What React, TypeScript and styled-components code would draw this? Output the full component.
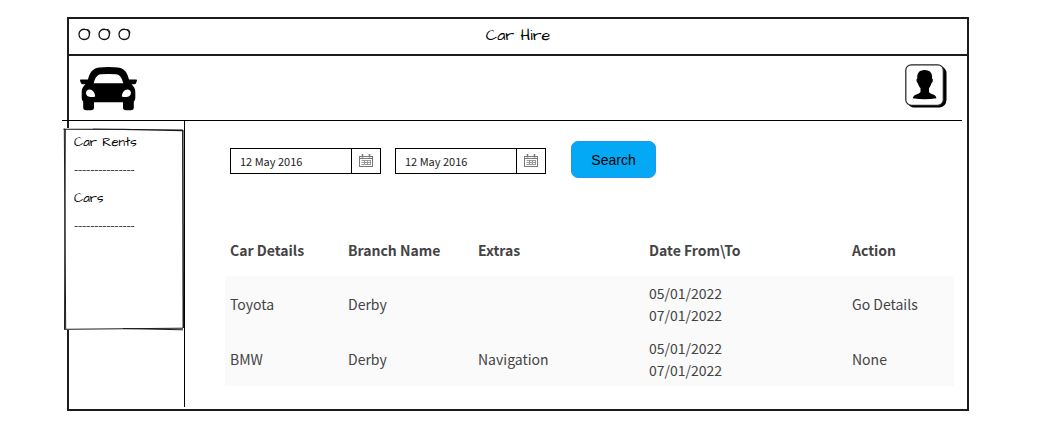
import React, { useState } from "react";
import styled, { createGlobalStyle } from "styled-components";

const INK = "#1c1c1c";
const SANS = '"Source Sans Pro", "Noto Sans CJK SC", "Open Sans", sans-serif';
const HAND = '"Architects Daughter", Lato, cursive, sans-serif';

const GlobalStyle = createGlobalStyle`
  *, *::before, *::after { box-sizing: border-box; }
  body { margin: 0; background: #fff; color: #000; font-family: ${SANS}; }
`;

const Page = styled.div`
  padding: 17px 89px 29px 67px;
`;

const Frame = styled.div`
  border: 2px solid ${INK};
  display: flex;
  flex-direction: column;
  min-height: 394px;
`;

const TitleBar = styled.div`
  display: grid;
  grid-template-columns: 1fr auto 1fr;
  align-items: center;
  height: 37px;
  padding: 0 9px 4px;
  border-bottom: 2px solid ${INK};
`;

const Dots = styled.div`
  display: flex;
  gap: 7px;
`;

const Title = styled.h1`
  margin: 0;
  font: 400 16px/24px ${HAND};
`;

const Header = styled.header`
  display: flex;
  align-items: flex-start;
  justify-content: space-between;
  height: 65px;
  margin: 0 5px 0 -7px;
  padding: 8px 15px 0 18px;
  border-bottom: 1px solid #000;
`;

const IconButton = styled.button`
  display: flex;
  padding: 0;
  border: 0;
  background: none;
  cursor: pointer;
`;

const Body = styled.div`
  display: flex;
  flex: 1;
`;

const Aside = styled.aside`
  flex: none;
  width: 116px;
  margin: 0 0 2px;
  padding-top: 7px;
  border-right: 1px solid #000;
`;

const NavCard = styled.nav`
  position: relative;
  height: 202px;
  margin-left: -6px;
  padding-left: 11px;
  background: #fff;
`;

const Outline = styled.svg`
  position: absolute;
  inset: 0;
  width: 100%;
  height: 100%;
  overflow: visible;
  pointer-events: none;
`;

const NavList = styled.ul`
  margin: 0;
  padding: 0;
  list-style: none;
  font: 400 13px/28px ${HAND};
`;

const NavLink = styled.a`
  color: inherit;
  text-decoration: none;
`;

const Main = styled.main`
  flex: 1;
  min-width: 0;
  padding: 20px 13px 22px 40px;
`;

const Filters = styled.form`
  display: flex;
  align-items: flex-end;
  gap: 14px;
  padding-left: 5px;
`;

const DateField = styled.div`
  display: flex;
  width: 151px;
  height: 26px;
  margin-bottom: 4px;
  border: 1px solid #000;
`;

const DateInput = styled.input`
  flex: 1;
  min-width: 0;
  padding: 0 9px;
  border: 0;
  background: none;
  color: #222;
  font: 400 11px/24px ${SANS};
`;

const CalendarButton = styled(IconButton)`
  align-items: center;
  justify-content: center;
  width: 29px;
  border-left: 1px solid #000;
`;

const SearchButton = styled.button`
  width: 85px;
  height: 37px;
  margin-left: 11px;
  padding: 0;
  border: 1px solid #2196f3;
  border-radius: 7px;
  background: #03a9f4;
  color: #000;
  font: 400 14px/20px "Liberation Sans", Arial, sans-serif;
  cursor: pointer;
`;

const Table = styled.table`
  width: 100%;
  margin-top: 45px;
  border-collapse: collapse;
  table-layout: fixed;
  color: #444;
  font: 400 14px/22px ${SANS};
  text-align: left;
`;

const Col = styled.col<{ $width: number }>`
  width: ${({ $width }) => $width}px;
`;

const Th = styled.th`
  height: 53px;
  padding: 0 5px;
  font-weight: 700;
`;

const Td = styled.td`
  height: 55px;
  padding: 0 5px;
  background: #fafafa;
`;

const DateLine = styled.div``;

const DotIcon = () => (
  <svg width="13" height="13" viewBox="0 0 13 13" fill="none" stroke="#111" strokeLinecap="round" aria-hidden="true">
    <path d="M7 1.300C3.500.9 1 3 1 6.200 1 9.500 3.400 11.500 6.300 11.500 9.300 11.500 11.200 9.300 11.400 6.500 11.600 3.500 10 1.400 6.500 1.300" strokeWidth="1.300" />
    <path d="M9 1.500C11.200 1.300 12.200 3 11.800 5.500" strokeWidth="1" />
  </svg>
);

const CarIcon = () => (
  <svg width="57" height="47" viewBox="0 -3 57 47" role="img" aria-label="Car Hire">
    <path
      fillRule="evenodd"
      d="M19 .5Q28.500-.3 38 .5C44.500 1.200 47.500 6 49 12.500H56.300Q57 12.500 57 13.500L56 16.300Q55.600 17.300 54 17.300H51.500C54 19.500 55.300 22 55.300 25V31Q55.300 33.500 53.800 34.500V40.500Q53.800 43.300 50.800 43.300H46Q43 43.300 43 40.500V35.300H14V40.500Q14 43.300 11 43.300H6.200Q3.200 43.300 3.200 40.500V34.500Q1.700 33.500 1.700 31V25C1.700 22 3 19.500 5.500 17.300H3Q1.400 17.300 1 16.300L0 13.500Q0 12.500.7 12.500H8C9.500 6 12.500 1.200 19 .5ZM21 7.300C17 7.600 15 11.500 13.700 16.300H43.300C42 11.500 40 7.600 36 7.300Q28.500 6.600 21 7.300ZM9.700 22.500C5 22.500 4.800 28.700 9.200 29.800Q12 30.500 15.200 29.500C15 25.500 12.500 22.500 9.700 22.500ZM47.300 22.500C44.500 22.500 42 25.500 41.800 29.500Q45 30.500 47.800 29.800C52.200 28.700 52 22.500 47.300 22.500Z"
    />
  </svg>
);

const UserIcon = () => (
  <svg width="42" height="44" viewBox="0 0 42 44" aria-hidden="true">
    <path d="M37 2.500Q41.500 5 41.500 9V36Q41 43 34.500 43.500H9Q5 43.500 3 39.500L34 40Q38 39 38 35Z" />
    <rect x=".8" y=".8" width="37.500" height="40.500" rx="5.500" fill="#fff" stroke="#222" strokeWidth="1.200" />
    <path d="M19.500 6C25.500 6 27.500 9.500 27 14.500 28.500 14.800 27.800 18.500 26.500 19 25.800 21.500 25 23 24 24V28C25.500 30.500 31 30 31.500 34.300Q19.500 36 7.800 34.300C8.500 30 14 30.500 15.500 28V24C14.300 23 13.500 21.500 12.800 19 11.500 18.500 11 14.800 12.300 14.500 11.800 9.500 14 6 19.500 6Z" />
  </svg>
);

const CalendarIcon = () => (
  <svg width="14" height="14" viewBox="0 0 14 14" fill="none" stroke="#777" aria-hidden="true">
    <path d="M.5 2.500H13.500M.5 2V13M13.500 2V13M0 12.500H14M1 4.500H13" />
    <path d="M3.500 0V3.500M10.500 0V3.500" strokeWidth="1.500" />
    <path d="M2.500 6.500H12M2.500 8.500H12M2.500 10.500H12M5.500 6V11M8.500 6V11M11.500 6V11" stroke="#999" />
  </svg>
);

const SketchOutline = () => (
  <Outline viewBox="0 0 121 202" preserveAspectRatio="none" fill="none" stroke={INK} aria-hidden="true">
    <path d="M.5 1.200L60 1.400 120 2.700M30 1L120 2" strokeWidth="1.100" />
    <path d="M1.300 .5L2.700 201M2.300 1L1.500 201" strokeWidth="1" />
    <path d="M119.800 2L120.300 200" strokeWidth="1.500" />
    <path d="M1 201.300L120 200.200M60 200.500L120 201.800" strokeWidth="1" />
  </Outline>
);

const navItems = ["Car Rents", "---------------", "Cars", "---------------"];

const columns = [
  { label: "Car Details", width: 118 },
  { label: "Branch Name", width: 130 },
  { label: "Extras", width: 171 },
  { label: "Date From\\To", width: 203 },
  { label: "Action", width: 107 },
];

const rentals = [
  { car: "Toyota", branch: "Derby", extras: "", from: "05/01/2022", to: "07/01/2022", action: "Go Details" },
  { car: "BMW", branch: "Derby", extras: "Navigation", from: "05/01/2022", to: "07/01/2022", action: "None" },
];

function DatePicker({ label }: { label: string }) {
  const [value, setValue] = useState("12 May 2016");
  return (
    <DateField>
      <DateInput aria-label={label} value={value} onChange={(e) => setValue(e.target.value)} />
      <CalendarButton type="button" aria-label={`Choose ${label}`}>
        <CalendarIcon />
      </CalendarButton>
    </DateField>
  );
}

export default function App() {
  return (
    <Page>
      <GlobalStyle />
      <Frame>
        <TitleBar>
          <Dots>
            <DotIcon />
            <DotIcon />
            <DotIcon />
          </Dots>
          <Title>Car Hire</Title>
        </TitleBar>
        <Header>
          <CarIcon />
          <IconButton type="button" aria-label="Account">
            <UserIcon />
          </IconButton>
        </Header>
        <Body>
          <Aside>
            <NavCard>
              <SketchOutline />
              <NavList>
                {navItems.map((item, i) => (
                  <li key={i}>{item.startsWith("-") ? item : <NavLink href="#">{item}</NavLink>}</li>
                ))}
              </NavList>
            </NavCard>
          </Aside>
          <Main>
            <Filters onSubmit={(e) => e.preventDefault()}>
              <DatePicker label="start date" />
              <DatePicker label="end date" />
              <SearchButton type="submit">Search</SearchButton>
            </Filters>
            <Table>
              <colgroup>
                {columns.map((c) => (
                  <Col key={c.label} $width={c.width} />
                ))}
              </colgroup>
              <thead>
                <tr>
                  {columns.map((c) => (
                    <Th key={c.label} scope="col">{c.label}</Th>
                  ))}
                </tr>
              </thead>
              <tbody>
                {rentals.map((r) => (
                  <tr key={r.car}>
                    <Td>{r.car}</Td>
                    <Td>{r.branch}</Td>
                    <Td>{r.extras}</Td>
                    <Td>
                      <DateLine>{r.from}</DateLine>
                      <DateLine>{r.to}</DateLine>
                    </Td>
                    <Td>{r.action}</Td>
                  </tr>
                ))}
              </tbody>
            </Table>
          </Main>
        </Body>
      </Frame>
    </Page>
  );
}
